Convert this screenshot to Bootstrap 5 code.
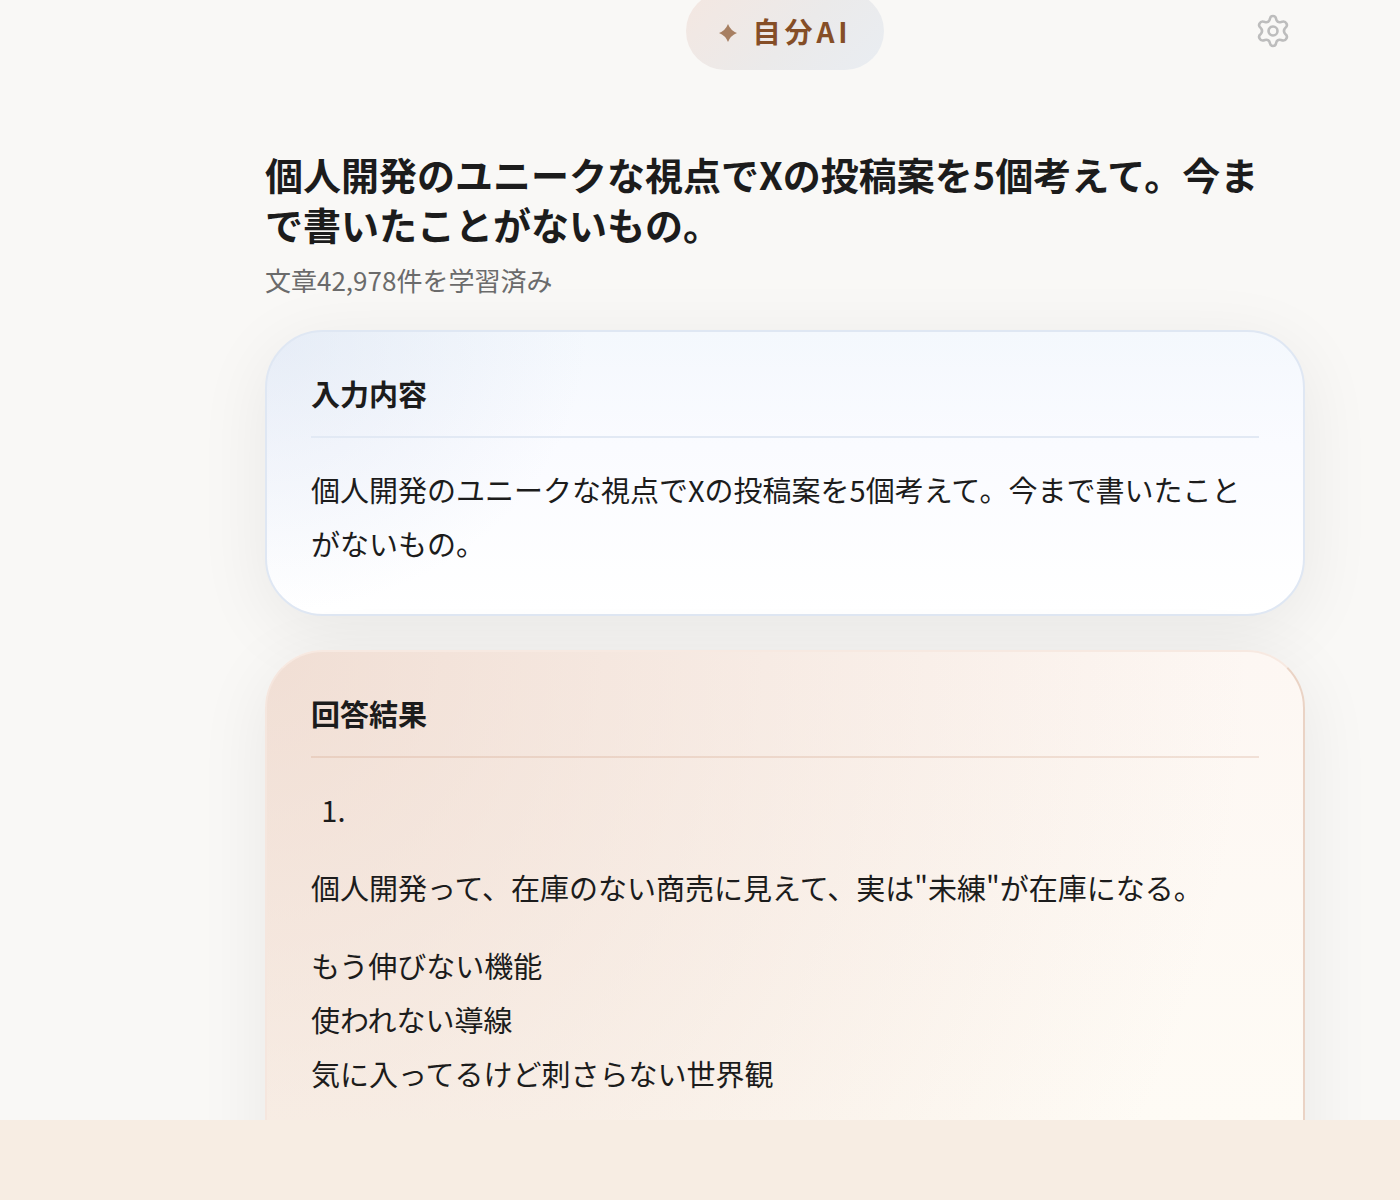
<!DOCTYPE html>
<html lang="ja">
<head>
<meta charset="utf-8">
<meta name="viewport" content="width=device-width, initial-scale=1">
<title>自分AI</title>
<link href="https://cdn.jsdelivr.net/npm/bootstrap@5.3.0/dist/css/bootstrap.min.css" rel="stylesheet">
<style>
  body {
    font-family: "Noto Sans CJK JP", sans-serif;
    color: #1c1c1c;
    background: #f7ede3;
  }
  .app-view { background: #f9f8f6; min-height: 0; }
  .page-column { margin-left: 265px; margin-right: 95px; }
  .app-top { margin-top: -8px; margin-bottom: 79px; }
  .brand-pill {
    height: 78px;
    padding: 0 32px;
    gap: 14px;
    border-radius: 39px;
    background: linear-gradient(135deg, #f4e7e1 0%, #ebeaea 55%, #e9edf2 100%);
    color: #854e27;
    font-size: 28px;
    font-weight: 700;
    letter-spacing: 4px;
  }
  .brand-pill:hover { color: #854e27; }
  .brand-pill svg { margin-top: 4px; }
  .settings-btn { color: #bdbdbd; line-height: 0; margin-right: 14px; }
  .page-title { font-size: 38px; line-height: 50px; font-weight: 700; padding-right: 16px; }
  .page-note { font-size: 26px; line-height: 38px; color: #6b6b6b; margin-bottom: 31px; }
  .panel {
    padding: 37px 44px 44px;
    border: 2px solid #dfe7f3;
    border-radius: 58px;
    box-shadow: 0 15px 72px rgba(0, 0, 0, .07);
    font-size: 29px;
    line-height: 54px;
    margin-bottom: 34px;
  }
  .panel-input {
    background:
      radial-gradient(ellipse 320px 280px at 0 0, rgba(212, 222, 238, .45), rgba(226, 235, 248, 0)),
      linear-gradient(180deg, #f4f8fd 0%, #fafbff 40%, #ffffff 100%) #fff;
  }
  .panel-answer {
    border-color: #f7e9e1 #ead3c5 #f5e4db #f5e6de;
    background:
      radial-gradient(ellipse 980px 1040px at 0 0, rgba(235, 211, 198, .68), rgba(246, 226, 216, 0)),
      linear-gradient(180deg, #fdf7f3 0%, #fefbf5 80%);
    min-height: 600px;
  }
  .panel-title {
    font-size: 29px;
    line-height: 48px;
    font-weight: 700;
    padding-bottom: 19px;
    margin-bottom: 24px;
    border-bottom: 2px solid #e2e9f4;
  }
  .panel-answer .panel-title { border-color: rgba(206, 150, 120, .24); }
  .panel p { margin-bottom: 24px; }
  .panel p:last-child { margin-bottom: 0; }
  .panel ol { padding-left: 41px; margin-bottom: 24px; }
  .app-foot { height: 80px; background: #f7ede3; }
</style>
</head>
<body>
<div class="d-flex flex-column vh-100 overflow-hidden">
  <div class="app-view flex-grow-1 overflow-hidden">
    <div class="page-column">
      <header class="app-top row g-0 align-items-center">
        <div class="col"></div>
        <div class="col-auto">
          <a href="#" class="brand-pill d-flex align-items-center text-decoration-none">
            <svg width="20" height="20" viewBox="0 0 20 20" fill="#a77f62" aria-hidden="true"><path d="M10 1Q12.500 7.500 19 10Q12.500 12.500 10 19Q7.500 12.500 1 10Q7.500 7.500 10 1Z"/></svg>
            <span>自分AI</span>
          </a>
        </div>
        <div class="col d-flex justify-content-end">
          <button type="button" class="settings-btn btn p-0 border-0" aria-label="設定">
            <svg width="36" height="36" viewBox="0 0 36 36" fill="none" stroke="currentColor" stroke-width="2.600" stroke-linejoin="round"><path d="M15 5.500Q15.500 3 18 3Q20.500 3 21 5.500Q21.800 10 26 9Q30 7.500 31.400 10.500Q32.800 13 30.500 14.700Q27.400 18 30.500 21.300Q32.800 23 31.400 25.500Q30 28.500 26 27Q21.800 26 21 30.500Q20.500 33 18 33Q15.500 33 15 30.500Q14.200 26 10 27Q6 28.500 4.600 25.500Q3.200 23 5.500 21.300Q8.600 18 5.500 14.700Q3.200 13 4.600 10.500Q6 7.500 10 9Q14.200 10 15 5.500Z"/><circle cx="18" cy="18" r="4.500"/></svg>
          </button>
        </div>
      </header>
      <main>
        <h1 class="page-title mb-2 pb-1">個人開発のユニークな視点でXの投稿案を5個考えて。今まで書いたことがないもの。</h1>
        <p class="page-note">文章42,978件を学習済み</p>
        <section class="panel panel-input">
          <h2 class="panel-title">入力内容</h2>
          <p>個人開発のユニークな視点でXの投稿案を5個考えて。今まで書いたことがないもの。</p>
        </section>
        <section class="panel panel-answer">
          <h2 class="panel-title">回答結果</h2>
          <ol><li></li></ol>
          <p>個人開発って、在庫のない商売に見えて、実は"未練"が在庫になる。</p>
          <p>もう伸びない機能<br>使われない導線<br>気に入ってるけど刺さらない世界観</p>
        </section>
      </main>
    </div>
  </div>
  <footer class="app-foot flex-shrink-0"></footer>
</div>
<script src="https://cdn.jsdelivr.net/npm/bootstrap@5.3.0/dist/js/bootstrap.bundle.min.js"></script>
</body>
</html>
